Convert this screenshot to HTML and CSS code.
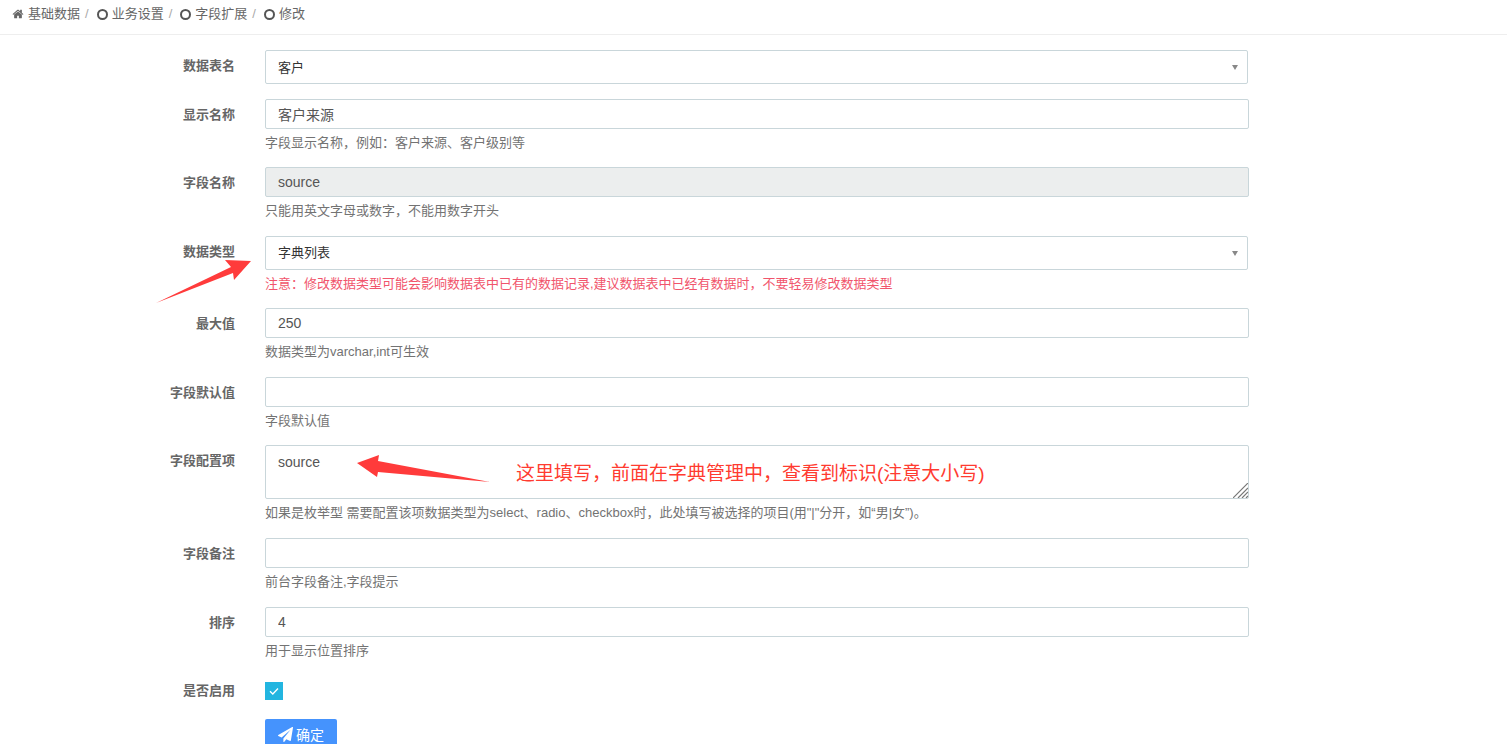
FILE: index.html

```html
<!DOCTYPE html>
<html lang="zh-CN">
<head>
    <meta charset="UTF-8">
    <title>修改字段</title>
    <link rel="stylesheet" href="styles.css">
</head>
<body>
    <div class="wrap">
        <!-- 面包屑 -->
        <ul class="crumb">
            <li>
                <svg class="ico_home" viewBox="0 0 1664 1792"><path d="M1408 992v480q0 26-19 45t-45 19H960v-384H704v384H320q-26 0-45-19t-19-45V992q0-1 .5-3t.5-3l575-474 575 474q1 2 1 6zm223-69-62 74q-8 9-21 11h-3q-13 0-21-7L832 424 140 1001q-12 8-24 7-13-2-21-11l-62-74q-8-10-7-23.500T37 878L756 279q32-26 76-26t76 26l244 204V288q0-14 9-23t23-9h192q14 0 23 9t9 23v408l219 182q10 8 11 21.500t-7 22.500z"/></svg>
                基础数据
            </li>
            <li><i class="ico_ring"></i>业务设置</li>
            <li><i class="ico_ring"></i>字段扩展</li>
            <li class="last"><i class="ico_ring"></i>修改</li>
        </ul>

        <form class="form">
            <div class="row">
                <label class="label">数据表名</label>
                <div class="field">
                    <div class="select_box">
                        <select class="select"><option>客户</option></select>
                    </div>
                </div>
            </div>
            <div class="row">
                <label class="label">显示名称</label>
                <div class="field">
                    <input class="input" type="text" value="客户来源">
                    <p class="help">字段显示名称，例如：客户来源、客户级别等</p>
                </div>
            </div>
            <div class="row">
                <label class="label">字段名称</label>
                <div class="field">
                    <input class="input" type="text" value="source" disabled>
                    <p class="help">只能用英文字母或数字，不能用数字开头</p>
                </div>
            </div>
            <div class="row">
                <label class="label">数据类型</label>
                <div class="field">
                    <div class="select_box">
                        <select class="select"><option>字典列表</option></select>
                    </div>
                    <p class="help help_red">注意：修改数据类型可能会影响数据表中已有的数据记录,建议数据表中已经有数据时，不要轻易修改数据类型</p>
                </div>
            </div>
            <div class="row">
                <label class="label">最大值</label>
                <div class="field">
                    <input class="input" type="text" value="250">
                    <p class="help">数据类型为varchar,int可生效</p>
                </div>
            </div>
            <div class="row">
                <label class="label">字段默认值</label>
                <div class="field">
                    <input class="input" type="text">
                    <p class="help">字段默认值</p>
                </div>
            </div>
            <div class="row row_area">
                <label class="label">字段配置项</label>
                <div class="field">
                    <div class="area_box">
                        <textarea class="input textarea">source</textarea>
                        <svg class="grip" viewBox="0 0 15 15"><path d="M0 15L15 0M5 15L15 5M9 15l6-6M13 15l2-2" stroke="#777" stroke-width="1.200" fill="none"/></svg>
                    </div>
                    <p class="help">如果是枚举型 需要配置该项数据类型为select、radio、checkbox时，此处填写被选择的项目(用"|"分开，如“男|女”)。</p>
                </div>
            </div>
            <div class="row">
                <label class="label">字段备注</label>
                <div class="field">
                    <input class="input" type="text">
                    <p class="help">前台字段备注,字段提示</p>
                </div>
            </div>
            <div class="row">
                <label class="label">排序</label>
                <div class="field">
                    <input class="input" type="text" value="4">
                    <p class="help">用于显示位置排序</p>
                </div>
            </div>
            <div class="row row_check">
                <label class="label">是否启用</label>
                <div class="field">
                    <span class="check">
                        <svg viewBox="0 0 18 18"><path d="M5 9.300l2.800 2.700L13 6.500" fill="none" stroke="#fff" stroke-width="1.300"/></svg>
                    </span>
                </div>
            </div>
            <div class="row">
                <div class="label"></div>
                <div class="field">
                    <button class="btn" type="button">
                        <svg class="ico_send" viewBox="0 0 1792 1792"><path d="M1764 11q33 24 27 64l-256 1536q-5 29-32 45-14 8-31 8-11 0-24-5l-453-185-242 295q-18 23-49 23-13 0-22-4-19-7-30.500-23.500T640 1728v-349l864-1059-1069 925-395-162q-37-14-40-55-2-40 32-59L1696 9q32-19 68 2z"/></svg>确定
                    </button>
                </div>
            </div>
        </form>

        <!-- 截图标注 -->
        <svg class="marks" viewBox="0 0 1507 744">
            <polygon points="156,303 231,267 225,260 251,261 234,280 233,273" fill="#ff3b3b"/>
            <polygon points="357,463 379,455 378,461 490,482 378,472 377,477" fill="#ff3b3b"/>
        </svg>
        <div class="note">这里填写，前面在字典管理中，查看到标识(注意大小写)</div>
    </div>
</body>
</html>
```

FILE: styles.css

```css
html, body, div, p, ul, li, form{
    margin: 0;
    padding: 0;
}
html, body{
    height: 100%;
    overflow: hidden;
}
body{
    background-color: #fff;
    font-family: "Liberation Sans", "Noto Sans CJK SC", sans-serif;
    font-size: 13px;
    color: #666;
}
ul{
    list-style: none;
}
.wrap{
    position: relative;
    height: 100%;
    overflow: hidden;
}
.crumb{
    display: flex;
    align-items: center;
    height: 28px;
    padding-left: 12px;
    border-bottom: 1px solid #eee;
    margin-bottom: 15px;
    padding-bottom: 6px;
    line-height: 28px;
}
.crumb li{
    display: flex;
    align-items: center;
}
.crumb li:after{
    content: "/";
    margin: 0 8px 0 5px;
    color: #aaa;
}
.crumb li.last:after{
    content: none;
}
.ico_home{
    width: 12px;
    height: 12px;
    margin-right: 4px;
    fill: #666;
}
.ico_ring{
    box-sizing: border-box;
    width: 11px;
    height: 11px;
    margin-right: 4px;
    border: 2px solid #555;
    border-radius: 50%;
}
.row{
    display: grid;
    grid-template-columns: 235px 984px;
    column-gap: 30px;
    margin-bottom: 15px;
}
.row_area{
    margin-bottom: 16px;
}
.label{
    padding-top: 7px;
    font-weight: bold;
    line-height: 18px;
    text-align: right;
}
.input{
    display: block;
    box-sizing: border-box;
    width: 100%;
    height: 30px;
    padding: 0 12px;
    border: 1px solid #c9d6da;
    border-radius: 2px;
    outline: 0;
    background-color: #fff;
    font-family: inherit;
    font-size: 14px;
    color: #555;
}
.input:disabled{
    background-color: #eceeee;
    color: #555;
}
.area_box{
    position: relative;
}
.textarea{
    height: 54px;
    padding: 6px 12px;
    line-height: 20px;
    resize: none;
}
.grip{
    position: absolute;
    right: 1px;
    bottom: 1px;
    width: 15px;
    height: 15px;
}
.select_box{
    position: relative;
    width: 983px;
}
.select_box:after{
    content: "";
    position: absolute;
    top: 15px;
    right: 10px;
    border-top: 5px solid #888;
    border-left: 3.500px solid transparent;
    border-right: 3.500px solid transparent;
}
.select{
    display: block;
    box-sizing: border-box;
    width: 100%;
    height: 34px;
    padding: 0 12px;
    border: 1px solid #c9d6da;
    border-radius: 2px;
    outline: 0;
    appearance: none;
    -webkit-appearance: none;
    background-color: #fff;
    font-family: inherit;
    font-size: 13px;
    color: #333;
}
.help{
    margin-top: 5px;
    font-size: 13px;
    line-height: 18.4px;
    color: #737373;
}
.help_red{
    color: #f1556c;
}
.row_check{
    margin-top: 22.200px;
    margin-bottom: 19px;
}
.row_check .label{
    padding-top: 0;
}
.check{
    display: block;
    width: 18px;
    height: 18px;
    background-color: #22b5e0;
}
.check svg{
    display: block;
}
.btn{
    display: flex;
    align-items: center;
    height: 34px;
    padding: 0 13px 4px 13px;
    border: 0;
    border-radius: 2px;
    background-color: #4593fd;
    font-family: inherit;
    font-size: 14px;
    color: #fff;
}
.ico_send{
    width: 15px;
    height: 15px;
    margin-right: 3px;
    fill: #fff;
}
.marks{
    position: absolute;
    top: 0;
    left: 0;
    width: 1507px;
    height: 744px;
    pointer-events: none;
}
.note{
    position: absolute;
    top: 460px;
    left: 516px;
    font-size: 19px;
    line-height: 28px;
    white-space: nowrap;
    color: #ff3b30;
}
```
